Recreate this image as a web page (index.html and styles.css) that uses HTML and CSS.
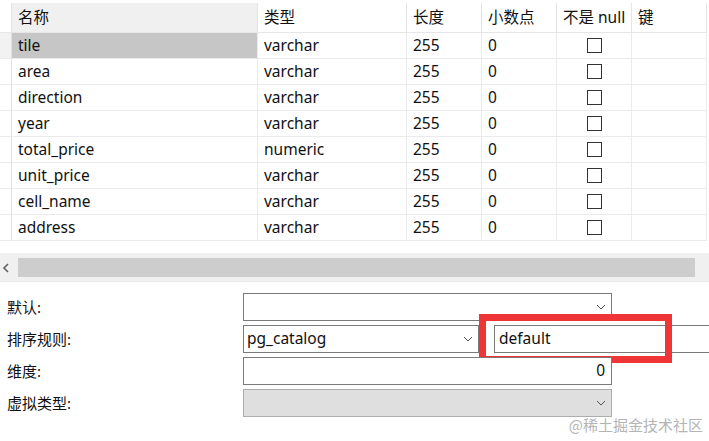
FILE: index.html
```html
<!DOCTYPE html>
<html>
<head>
<meta charset="utf-8">
<link rel="stylesheet" href="styles.css">
</head>
<body>
<div class="page">
  <div class="grid">
    <div class="c ind hd"></div>
    <div class="c hd hcur">名称</div>
    <div class="c hd">类型</div>
    <div class="c hd">长度</div>
    <div class="c hd">小数点</div>
    <div class="c hd">不是 null</div>
    <div class="c hd">键</div>

    <div class="c ind sel-ind"></div>
    <div class="c sel">tile</div>
    <div class="c">varchar</div>
    <div class="c">255</div>
    <div class="c">0</div>
    <div class="c ck"><span class="box"></span></div>
    <div class="c"></div>

    <div class="c ind"></div>
    <div class="c">area</div>
    <div class="c">varchar</div>
    <div class="c">255</div>
    <div class="c">0</div>
    <div class="c ck"><span class="box"></span></div>
    <div class="c"></div>

    <div class="c ind"></div>
    <div class="c">direction</div>
    <div class="c">varchar</div>
    <div class="c">255</div>
    <div class="c">0</div>
    <div class="c ck"><span class="box"></span></div>
    <div class="c"></div>

    <div class="c ind"></div>
    <div class="c">year</div>
    <div class="c">varchar</div>
    <div class="c">255</div>
    <div class="c">0</div>
    <div class="c ck"><span class="box"></span></div>
    <div class="c"></div>

    <div class="c ind"></div>
    <div class="c">total_price</div>
    <div class="c">numeric</div>
    <div class="c">255</div>
    <div class="c">0</div>
    <div class="c ck"><span class="box"></span></div>
    <div class="c"></div>

    <div class="c ind"></div>
    <div class="c">unit_price</div>
    <div class="c">varchar</div>
    <div class="c">255</div>
    <div class="c">0</div>
    <div class="c ck"><span class="box"></span></div>
    <div class="c"></div>

    <div class="c ind"></div>
    <div class="c">cell_name</div>
    <div class="c">varchar</div>
    <div class="c">255</div>
    <div class="c">0</div>
    <div class="c ck"><span class="box"></span></div>
    <div class="c"></div>

    <div class="c ind"></div>
    <div class="c">address</div>
    <div class="c">varchar</div>
    <div class="c">255</div>
    <div class="c">0</div>
    <div class="c ck"><span class="box"></span></div>
    <div class="c"></div>
  </div>

  <div class="hscroll">
    <div class="arrow">
      <svg width="8" height="10" viewBox="0 0 8 10"><path d="M6 1 L2 5 L6 9" fill="none" stroke="#606060" stroke-width="1.6"/></svg>
    </div>
    <div class="thumb"></div>
  </div>

  <div class="form">
    <div class="frow">
      <div class="lbl">默认:</div>
      <div class="ctl wide">
        <span class="val"></span>
        <svg class="chev" width="10" height="6" viewBox="0 0 10 6"><path d="M1 1 L5 5 L9 1" fill="none" stroke="#555" stroke-width="1"/></svg>
      </div>
    </div>
    <div class="frow">
      <div class="lbl">排序规则:</div>
      <div class="ctl narrow">
        <span class="val">pg_catalog</span>
        <svg class="chev" width="10" height="6" viewBox="0 0 10 6"><path d="M1 1 L5 5 L9 1" fill="none" stroke="#555" stroke-width="1"/></svg>
      </div>
      <div class="ctl rest"><span class="val">default</span></div>
      <div class="redbox"></div>
    </div>
    <div class="frow">
      <div class="lbl">维度:</div>
      <div class="ctl wide num"><span class="val">0</span></div>
    </div>
    <div class="frow">
      <div class="lbl">虚拟类型:</div>
      <div class="ctl wide dis">
        <span class="val"></span>
        <svg class="chev" width="10" height="6" viewBox="0 0 10 6"><path d="M1 1 L5 5 L9 1" fill="none" stroke="#555" stroke-width="1"/></svg>
      </div>
    </div>
  </div>

  <div class="wm">@稀土掘金技术社区</div>
</div>
</body>
</html>
```

FILE: styles.css
```css
html, body {
  margin: 0;
  padding: 0;
  background: #ffffff;
}
body {
  font-family: "Noto Sans", "Noto Sans CJK SC", sans-serif;
  font-size: 15px;
  color: #111111;
}
.page {
  position: relative;
  width: 709px;
  height: 441px;
  overflow: hidden;
}
.grid {
  margin-top: 3px;
  display: grid;
  grid-template-columns: 12px 246px 149px 75px 75px 75px 75px;
  grid-auto-rows: 26px;
  grid-template-rows: 30px;
  width: 707px;
  font-size: 15.5px;
}
.c {
  box-sizing: border-box;
  border-right: 1px solid #ebebeb;
  border-bottom: 1px solid #ebebeb;
  display: flex;
  align-items: center;
  padding-left: 6px;
  padding-top: 1px;
  white-space: nowrap;
  line-height: 1;
}
.ind {
  padding: 0;
  border-right: 1px solid #e2e2e2;
}
.hd {
  border-right: 1px solid #e4e4e4;
  border-bottom: 1px solid #e6e6e6;
  padding-top: 0;
}
.hcur {
  background: #f0f0f0;
}
.sel {
  background: #c6c6c6;
}
.sel-ind {
  background: #f2f2f2;
}
.ck {
  justify-content: center;
  padding-left: 0;
  padding-top: 0;
}
.box {
  width: 15px;
  height: 15px;
  box-sizing: border-box;
  border: 1px solid #333333;
  background: #ffffff;
  margin-top: -1px;
}
.hscroll {
  margin-top: 12px;
  height: 28px;
  background: #f0f0f0;
  display: flex;
  align-items: center;
  border-bottom: 1px solid #e9e9e9;
}
.arrow {
  width: 18px;
  display: flex;
  justify-content: center;
  padding-top: 1px;
}
.arrow svg {
  margin-left: -6px;
}
.thumb {
  width: 677px;
  height: 19px;
  margin-top: 1px;
  background: #cdcdcd;
}
.form {
  padding-top: 11px;
  display: flex;
  flex-direction: column;
  gap: 4px;
}
.frow {
  position: relative;
  display: flex;
  align-items: center;
  height: 28px;
}
.lbl {
  width: 243px;
  padding-left: 7px;
  box-sizing: border-box;
  flex-shrink: 0;
  line-height: 1;
  padding-top: 1px;
}
.ctl {
  box-sizing: border-box;
  height: 28px;
  border: 1px solid #7a7a7a;
  background: #ffffff;
  display: flex;
  align-items: center;
  padding: 0 5px 0 3px;
  flex-shrink: 0;
  font-size: 15.5px;
}
.val {
  flex: 1;
  line-height: 1;
  padding-bottom: 1px;
}
.wide {
  width: 369px;
}
.narrow {
  width: 236px;
}
.rest {
  margin-left: 15px;
  width: 240px;
  padding-left: 4px;
}
.num .val {
  text-align: right;
  padding-top: 1px;
}
.num {
  padding-right: 6px;
}
.dis {
  background: #dfdfdf;
  border-color: #adadad;
}
.chev {
  flex-shrink: 0;
}
.redbox {
  position: absolute;
  left: 479px;
  top: -11px;
  width: 193px;
  height: 49px;
  box-sizing: border-box;
  border: 7px solid #ef3535;
}
.wm {
  position: absolute;
  right: 6px;
  top: 417px;
  color: #b4b4b4;
  font-size: 15px;
  line-height: 1;
  font-family: "Noto Sans CJK SC", sans-serif;
}
```
